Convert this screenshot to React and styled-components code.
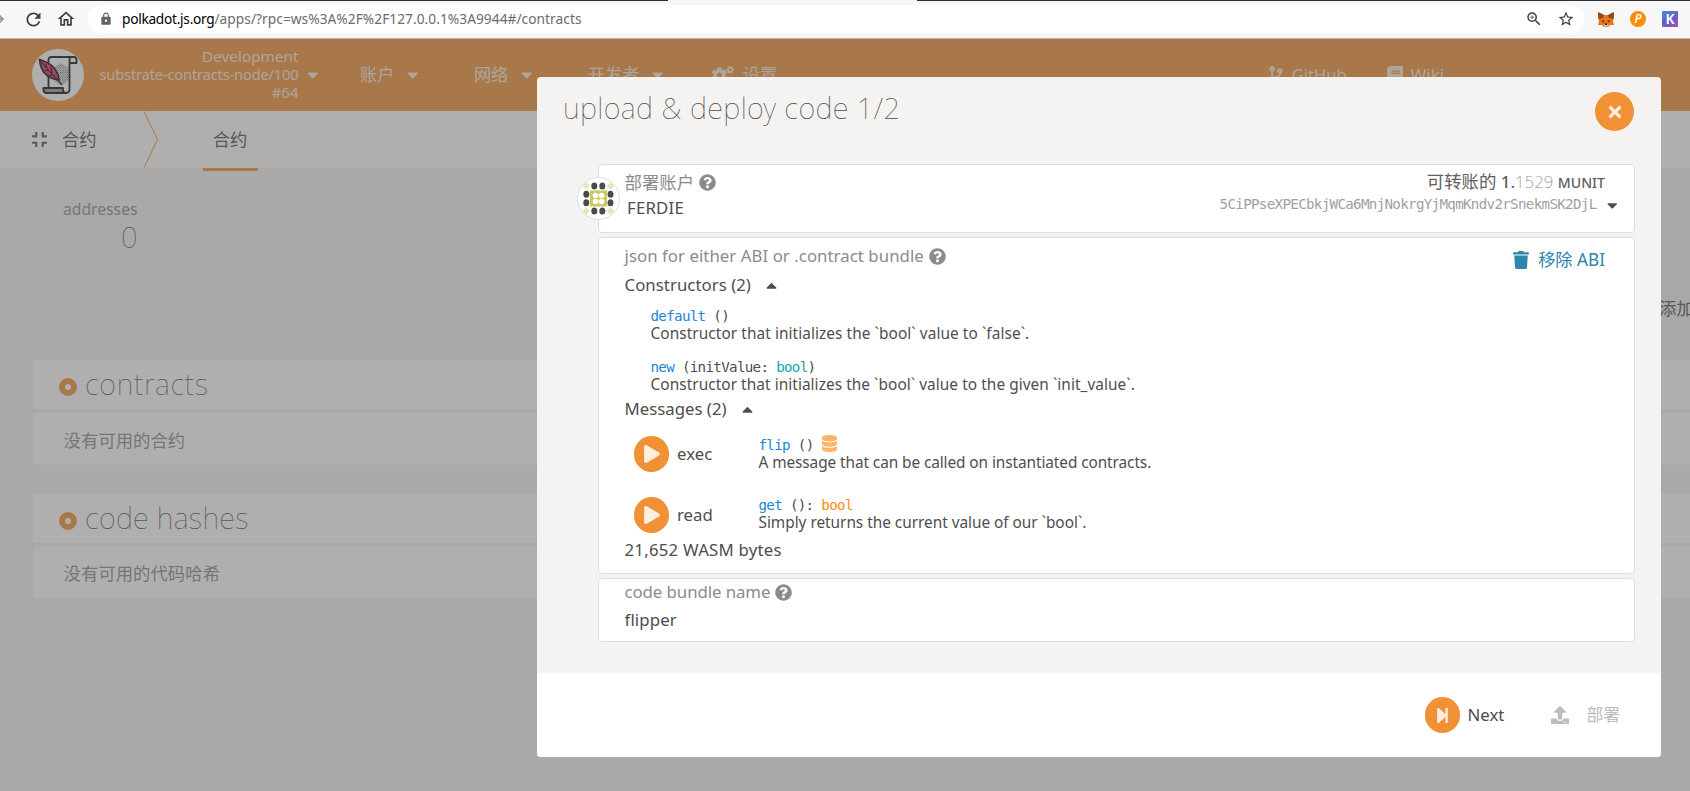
import React from 'react';
import styled, { createGlobalStyle, css } from 'styled-components';
import {
  FaBook, FaCaretDown, FaCaretUp, FaCodeBranch, FaCogs, FaCompress, FaDatabase,
  FaPlay, FaQuestionCircle, FaStepForward, FaTimes, FaTrash, FaUpload,
} from 'react-icons/fa';
import { MdArrowForward, MdLock, MdOutlineHome, MdRefresh, MdStarBorder, MdZoomIn } from 'react-icons/md';

const orange = '#f19135';

const Global = createGlobalStyle`
  *, *::before, *::after { box-sizing: border-box; }
  html, body { margin: 0; height: 100%; overflow: hidden; }
  body {
    background: #f4f3f1;
    color: #4e4e4e;
    font-family: 'Noto Sans', 'Noto Sans CJK SC', sans-serif;
    font-size: 16.8px;
    line-height: 24px;
    white-space: nowrap;
  }
  svg { display: block; flex: none; }
`;

const thin = css`
  font-family: 'Noto Sans', sans-serif;
  font-weight: 100;
  font-size: 29px;
  line-height: 38px;
`;

const mono = css`
  font-family: 'DejaVu Sans Mono', monospace;
  font-size: 14.2px;
  letter-spacing: -0.69px;
`;

const Screen = styled.div`
  width: 1690px;
  height: 791px;
  display: flex;
  flex-direction: column;
  overflow: hidden;
`;

const Down = styled(FaCaretDown)`
  margin: 0 -3px;
`;
const Up = styled(FaCaretUp)`
  margin: 0 -3px;
`;

/* Browser toolbar */
const BrowserBar = styled.header`
  position: relative;
  flex: none;
  height: 39px;
  padding-top: 3px;
  display: flex;
  align-items: center;
  background: #f7f7f7;
  border-top: 1px solid #322f33;
  border-bottom: 1px solid #b9b7b6;
  color: #3c4043;
`;
const TabEdge = styled.span`
  position: absolute;
  top: -1px;
  left: 668px;
  width: 249px;
  height: 1px;
  background: #f7f7f7;
`;
const BrowserButtons = styled.div`
  width: 102px;
  margin-left: -14px;
  display: flex;
  align-items: center;
  gap: 12px;
  margin-bottom: 4px;
  & > :first-child { color: #9b9ea1; margin-right: 3px; }
`;
const Omnibox = styled.div`
  width: 1496px;
  height: 28px;
  margin: 0 14px 4px 0;
  padding: 0 9px 0 11px;
  border-radius: 14px;
  background: #fff;
  display: flex;
  align-items: center;
  & > svg:first-child { color: #5f6368; margin-right: 9px; }
`;
const Url = styled.div`
  flex: 1;
  font-size: 13.7px;
  line-height: 20px;
  color: #686c70;
  letter-spacing: 0.06px;
`;
const UrlHost = styled.span`
  color: #000;
  letter-spacing: -0.27px;
`;
const OmniActions = styled.div`
  display: flex;
  gap: 14px;
`;
const Extensions = styled.div`
  display: flex;
  gap: 16px;
  margin-bottom: 4px;
`;
const ExtensionP = styled.span`
  width: 16px;
  height: 16px;
  border-radius: 50%;
  background: #fd8c00;
  color: #fff;
  font: italic 600 12px/16px 'Noto Sans', sans-serif;
  text-align: center;
`;
const ExtensionK = styled.span`
  width: 16px;
  height: 16px;
  border-radius: 1px;
  background: linear-gradient(150deg, #4a8fd0, #5b62c4 50%, #a64fc4);
  color: #fff;
  font: 600 14px/16px 'Noto Sans', sans-serif;
  text-align: center;
`;

/* Application page */
const Page = styled.main`
  position: relative;
  flex: 1;
  display: flex;
  flex-direction: column;
`;
const TopMenu = styled.nav`
  flex: none;
  height: 72px;
  padding-left: 32px;
  display: flex;
  align-items: center;
  background: ${orange};
  color: rgba(255, 255, 255, 0.8);
  font-size: 17.4px;
`;
const NodeInfo = styled.div`
  width: 214.5px;
  text-align: right;
  line-height: 18px;
  margin: 0 8.5px 3px 0;
`;
const NodeLine = styled.div`
  letter-spacing: ${p => p.$track || 0}px;
  font-size: ${p => p.$size || 15}px;
`;
const MenuItem = styled.div`
  display: flex;
  align-items: center;
  gap: ${p => p.$gap || 12.5}px;
  margin-left: ${p => p.$before}px;
  font-size: ${p => p.$size || 17.2}px;
`;
const Cogs = styled(FaCogs)`width: 22px;`;
const Branch = styled(FaCodeBranch)`width: 14px;`;
const Book = styled(FaBook)`width: 16px;`;

const TabBar = styled.nav`
  flex: none;
  height: 57px;
  display: flex;
  align-items: stretch;
  background: #fff;
  font-size: 17.3px;
`;
const AppName = styled.div`
  display: flex;
  align-items: center;
  gap: 14px;
  width: 144px;
  padding-left: 31px;
`;
const Tab = styled.div`
  width: 55px;
  height: 60px;
  margin-left: 44.5px;
  padding-top: 17px;
  text-align: center;
  border-bottom: 3px solid ${orange};
`;

const Summary = styled.section`
  height: 128px;
  padding: 29px 0 0 63px;
`;
const Stat = styled.div`
  width: 74.5px;
  text-align: right;
  color: #8b8b8b;
  font-size: 15.7px;
`;
const StatValue = styled.div`
  ${thin}
  margin-top: -3px;
  color: #4e4e4e;
`;
const Actions = styled.div`
  width: 31px;
  height: 64px;
  margin-left: auto;
  overflow: hidden;
  font-size: 17.4px;
`;
const Table = styled.section`
  margin: 0 0 28px 33px;
`;
const TableHead = styled.div`
  height: ${p => p.$height}px;
  padding: 0 0 1px 26px;
  display: flex;
  align-items: center;
  gap: 8px;
  background: #fff;
  margin-bottom: 4px;
`;
const Ring = styled.span`
  width: 18px;
  height: 18px;
  margin-top: 6px;
  border: 6px solid ${orange};
  border-radius: 50%;
`;
const TableTitle = styled.h1`
  ${thin}
  margin: 0;
  letter-spacing: ${p => p.$track}px;
`;
const TableEmpty = styled.div`
  height: ${p => p.$height}px;
  padding: ${p => p.$top}px 0 0 30.5px;
  background: #fff;
  border-radius: 4px 0 0 4px;
  color: #8b8b8b;
  font-size: 17.4px;
`;

/* Modal */
const Overlay = styled.div`
  position: absolute;
  inset: 0;
  background: rgba(96, 96, 96, 0.5);
`;
const Modal = styled.section`
  position: absolute;
  left: 537px;
  top: 38px;
  width: 1124px;
  height: 680px;
  display: flex;
  flex-direction: column;
  border-radius: 4px;
  overflow: hidden;
  background: #f4f3f1;
`;
const ModalHeader = styled.header`
  height: 87px;
  padding: 12px 27px 0 26px;
  display: flex;
  justify-content: space-between;
`;
const ModalTitle = styled.h1`
  ${thin}
  margin: 0;
  letter-spacing: 0.4px;
`;
const RoundButton = styled.span`
  flex: none;
  width: ${p => p.$size}px;
  height: ${p => p.$size}px;
  border-radius: 50%;
  display: flex;
  align-items: center;
  justify-content: center;
  background: ${orange};
  color: #fdeee0;
`;
const CloseButton = styled(RoundButton)`
  margin-top: 3px;
`;
const ModalContent = styled.div`
  flex: 1;
  display: flex;
  flex-direction: column;
  gap: 4px;
  padding: 0 26px 0 60.5px;
`;
const Card = styled.div`
  position: relative;
  height: ${p => p.$height}px;
  padding: ${p => p.$top}px 17px 0 26px;
  border: 1px solid #dfdedd;
  border-radius: 4px;
  background: #fff;
`;
const Split = styled.div`
  display: flex;
  justify-content: space-between;
  align-items: flex-start;
`;
const Label = styled.div`
  display: flex;
  align-items: center;
  gap: 5px;
  height: 24px;
  margin-bottom: ${p => p.$below || 0}px;
  color: #8b8b8b;
  font-size: ${p => p.$size || 16.8}px;
  letter-spacing: ${p => p.$track || 0}px;
`;
const Value = styled.div`
  margin-left: ${p => p.$indent || 0}px;
  margin-top: ${p => p.$above || 0}px;
  letter-spacing: ${p => p.$track || 0}px;
`;
const AccountIcon = styled.span`
  position: absolute;
  left: -21.5px;
  top: 12px;
`;
const Balance = styled.div`
  margin: -1px 12px 0 0;
  text-align: right;
  height: 25px;
  font-size: 17.4px;
  color: #606060;
  & b { font-weight: 500; font-size: 16.8px; }
  & i { font-style: normal; font-weight: 200; font-size: 16.8px; color: #8b8b8b; }
  & small { font-size: 14.1px; font-weight: 500; }
`;
const Address = styled.div`
  display: flex;
  align-items: center;
  justify-content: flex-end;
  gap: 10px;
  height: 20px;
  ${mono}
  line-height: 20px;
  & > span { color: #a0a0a0; }
  & > svg { margin-top: 2px; }
`;
const RemoveAbi = styled.div`
  display: flex;
  align-items: center;
  gap: 8px;
  margin: 4px 12px 0 0;
  height: 24px;
  color: #2f86ab;
  font-size: 17.2px;
`;
const Expander = styled.div`
  display: flex;
  align-items: center;
  gap: 15px;
  height: 24px;
  letter-spacing: ${p => p.$track || 0}px;
`;
const Method = styled.div`
  margin-bottom: ${p => p.$below || 0}px;
  margin-top: ${p => -(p.$lift || 0)}px;
`;
const Constructors = styled.div`
  padding: 10px 0 4px 26px;
`;
const Signature = styled.div`
  display: flex;
  height: 19px;
  white-space: pre;
  ${mono}
  line-height: 19px;
  & > svg { margin: -1px 0 0 8px; color: #ffb366; }
`;
const Name = styled.span`color: #2185d0;`;
const ParamType = styled.span`color: #14a2ad;`;
const ReturnType = styled.span`color: #ff8c0a;`;
const Doc = styled.div`
  font-size: 15.4px;
  line-height: 16px;
  letter-spacing: ${p => p.$track || 0}px;
`;
const Messages = styled.div`
  display: grid;
  gap: 25px;
  padding: 15px 0 5px 9px;
`;
const Message = styled.div`
  display: grid;
  grid-template-columns: 35.5px 73.5px auto;
  column-gap: 8px;
  align-items: center;
  height: 36px;
  & ${RoundButton} > svg { margin-left: 1px; }
`;
const ModalFooter = styled.footer`
  height: 84px;
  padding: 0 41px 0 0;
  display: flex;
  align-items: center;
  justify-content: flex-end;
  background: #fff;
`;
const Action = styled.div`
  display: flex;
  align-items: center;
  gap: ${p => p.$gap}px;
  margin-right: ${p => p.$after || 0}px;
  color: ${p => (p.$disabled ? '#bcbcbc' : '#4e4e4e')};
`;

const Logo = () => (
  <svg width="52" height="52" viewBox="0 0 52 52">
    <defs>
      <pattern id="dots" width="2.4" height="2.4" patternUnits="userSpaceOnUse">
        <circle cx="0.7" cy="0.7" r="0.55" fill="#333" />
        <circle cx="1.9" cy="1.9" r="0.55" fill="#333" />
      </pattern>
    </defs>
    <circle cx="26" cy="26" r="26" fill="#fff" />
    <path d="M29 14l8 5v12l-8 6-7-5V18z" fill="url(#dots)" />
    <g fill="none" stroke="#111" strokeWidth="1.8" strokeLinejoin="round" strokeLinecap="round">
      <path d="M16.5 38V11q0-3 3-3H42q2.5 0 2.5 3v3h-7v-3q0-3 2-3M37.5 13v27q0 4-3.5 4" />
      <path d="M11.5 39H31v2q0 3 3 3H15q-3.5 0-3.5-3z" fill="#999" />
      <path d="M7.5 10.5C17 13 25.5 18 27 31 18 30 9 26 7.5 10.5z" fill="#ff1c68" />
      <path d="M7.5 10.5Q17 23 29.5 35M14 15l1 5M19 18.5l1 6M11 22l5-1M15 27l5-1" strokeWidth="1.2" />
    </g>
  </svg>
);

const Fox = () => (
  <svg width="16" height="16" viewBox="0 0 16 16">
    <path d="M0 1l6 3h4l6-3v6l-1 3 1 4-4 0-2 2H6l-2-2-4 0 1-4-1-3z" fill="#e8761e" />
    <path d="M0 1l6 3-1 3-4.5 1zM16 1l-6 3 1 3 4.5 1z" fill="#8a4a1f" />
    <path d="M3.5 9l3 1-1 1.5zM12.5 9l-3 1 1 1.5z" fill="#3a2a20" />
    <path d="M5.5 13h5l-1 2.5h-3z" fill="#d8c9bc" />
    <path d="M6.5 12.5h3l-.5 1.5H7z" fill="#2a2220" />
  </svg>
);

const darkDots = [
  [15.8, 9.5], [23.8, 9.5], [7.8, 17.8], [7.8, 26.2], [32, 17.8], [32, 26.2], [15.8, 34.5], [23.8, 34.5],
];
const paleDiamonds = [[7.8, 9.5], [32, 9.5], [7.8, 34.5], [32, 34.5]];
const whiteDots = [[17, 19], [23, 19], [17, 25], [23, 25]];

const Identicon = () => (
  <svg width="43" height="43" viewBox="-1.5 0.5 43 43">
    <circle cx="20" cy="22" r="21" fill="#fff" stroke="#dedede" />
    {darkDots.map(([x, y]) => <ellipse key={`${x}-${y}`} cx={x} cy={y} rx="3" ry="3.5" fill="#4b4b4b" />)}
    {paleDiamonds.map(([x, y]) => (
      <path key={`${x}-${y}`} d={`M${x} ${y - 3.8}l3.8 3.8-3.8 3.8-3.8-3.8z`} fill="#e3e5b4" />
    ))}
    <rect x="11.5" y="14" width="17" height="16" fill="#c9ca5c" />
    {whiteDots.map(([x, y]) => <circle key={`${x}-${y}`} cx={x} cy={y} r="2.8" fill="#fff" />)}
  </svg>
);

const Chevron = () => (
  <svg width="14" height="57" viewBox="0 0 14 57">
    <path d="M0 .5l13.5 28L0 56.5" fill="none" stroke={orange} />
  </svg>
);

export default function App() {
  return (
    <Screen>
      <Global />
      <BrowserBar>
        <TabEdge />
        <BrowserButtons>
          <MdArrowForward size={22} />
          <MdRefresh size={21} />
          <MdOutlineHome size={20} />
        </BrowserButtons>
        <Omnibox>
          <MdLock size={14} />
          <Url><UrlHost>polkadot.js.org</UrlHost>/apps/?rpc=ws%3A%2F%2F127.0.0.1%3A9944#/contracts</Url>
          <OmniActions>
            <MdZoomIn size={18} />
            <MdStarBorder size={18} />
          </OmniActions>
        </Omnibox>
        <Extensions>
          <Fox />
          <ExtensionP>P</ExtensionP>
          <ExtensionK>K</ExtensionK>
        </Extensions>
      </BrowserBar>

      <Page>
        <TopMenu>
          <Logo />
          <NodeInfo>
            <NodeLine $size={15.3}>Development</NodeLine>
            <NodeLine $size={14.6} $track={-0.14}>substrate-contracts-node/100</NodeLine>
            <NodeLine>#64</NodeLine>
          </NodeInfo>
          <Down size={17.5} />
          <MenuItem $before={41.5}>账户<Down size={17.5} /></MenuItem>
          <MenuItem $before={55.5}>网络<Down size={17.5} /></MenuItem>
          <MenuItem $before={55.5}>开发者<Down size={17.5} /></MenuItem>
          <MenuItem $before={49} $gap={8.5}><Cogs size={18} />设置</MenuItem>
          <MenuItem $before={492} $gap={8.5} $size={16.5}><Branch size={18} />GitHub</MenuItem>
          <MenuItem $before={40} $gap={8} $size={17}><Book size={18} />Wiki</MenuItem>
        </TopMenu>

        <TabBar>
          <AppName><FaCompress size={17} />合约</AppName>
          <Chevron />
          <Tab>合约</Tab>
        </TabBar>

        <Summary>
          <Stat>addresses<StatValue>0</StatValue></Stat>
        </Summary>
        <Actions>添加</Actions>
        <Table>
          <TableHead $height={49}><Ring /><TableTitle $track={0.68}>contracts</TableTitle></TableHead>
          <TableEmpty $height={52} $top={15}>没有可用的合约</TableEmpty>
        </Table>
        <Table>
          <TableHead $height={50}><Ring /><TableTitle $track={0.28}>code hashes</TableTitle></TableHead>
          <TableEmpty $height={51} $top={14}>没有可用的代码哈希</TableEmpty>
        </Table>

        <Overlay>
          <Modal>
            <ModalHeader>
              <ModalTitle>upload &amp; deploy code 1/2</ModalTitle>
              <CloseButton $size={39}><FaTimes size={18} /></CloseButton>
            </ModalHeader>
            <ModalContent>
              <Card $height={69} $top={5}>
                <AccountIcon><Identicon /></AccountIcon>
                <Split>
                  <div>
                    <Label $size={17.4}><span>部署账户</span><FaQuestionCircle size={17} /></Label>
                    <Value $indent={2.5} $above={2} $track={0.2}>FERDIE</Value>
                  </div>
                  <div>
                    <Balance>可转账的 <b>1.</b><i>1529</i> <small>MUNIT</small></Balance>
                    <Address><span>5CiPPseXPECbkjWCa6MnjNokrgYjMqmKndv2rSnekmSK2DjL</span><Down size={16.5} /></Address>
                  </div>
                </Split>
              </Card>
              <Card $height={337} $top={6}>
                <Split>
                  <Label $below={5} $track={0.05}>json for either ABI or .contract bundle<FaQuestionCircle size={17} /></Label>
                  <RemoveAbi><FaTrash size={18} />移除 ABI</RemoveAbi>
                </Split>
                <Expander $track={0.04}>Constructors (2)<Up size={17} /></Expander>
                <Constructors>
                  <Method $below={16}>
                    <Signature><Name>default</Name> ()</Signature>
                    <Doc $track={0.07}>Constructor that initializes the `bool` value to `false`.</Doc>
                  </Method>
                  <Method>
                    <Signature><Name>new</Name> (initValue: <ParamType>bool</ParamType>)</Signature>
                    <Doc $track={0.055}>Constructor that initializes the `bool` value to the given `init_value`.</Doc>
                  </Method>
                </Constructors>
                <Expander $track={0}>Messages (2)<Up size={17} /></Expander>
                <Messages>
                  <Message>
                    <RoundButton $size={35.5}><FaPlay size={18} /></RoundButton>
                    <span>exec</span>
                    <Method $lift={1}>
                      <Signature><Name>flip</Name> ()<FaDatabase size={17} /></Signature>
                      <Doc $track={-0.09}>A message that can be called on instantiated contracts.</Doc>
                    </Method>
                  </Message>
                  <Message>
                    <RoundButton $size={35.5}><FaPlay size={18} /></RoundButton>
                    <span>read</span>
                    <Method $lift={3}>
                      <Signature><Name>get</Name> (): <ReturnType>bool</ReturnType></Signature>
                      <Doc $track={-0.03}>Simply returns the current value of our `bool`.</Doc>
                    </Method>
                  </Message>
                </Messages>
                <Value $track={0.23}>21,652 WASM bytes</Value>
              </Card>
              <Card $height={64} $top={1}>
                <Label $track={-0.06}>code bundle name<FaQuestionCircle size={17} /></Label>
                <Value $above={4} $track={0.12}>flipper</Value>
              </Card>
            </ModalContent>
            <ModalFooter>
              <Action $gap={7.5} $after={47}>
                <RoundButton $size={35.5}><FaStepForward size={17} /></RoundButton>Next
              </Action>
              <Action $gap={17} $disabled><FaUpload size={18} />部署</Action>
            </ModalFooter>
          </Modal>
        </Overlay>
      </Page>
    </Screen>
  );
}
